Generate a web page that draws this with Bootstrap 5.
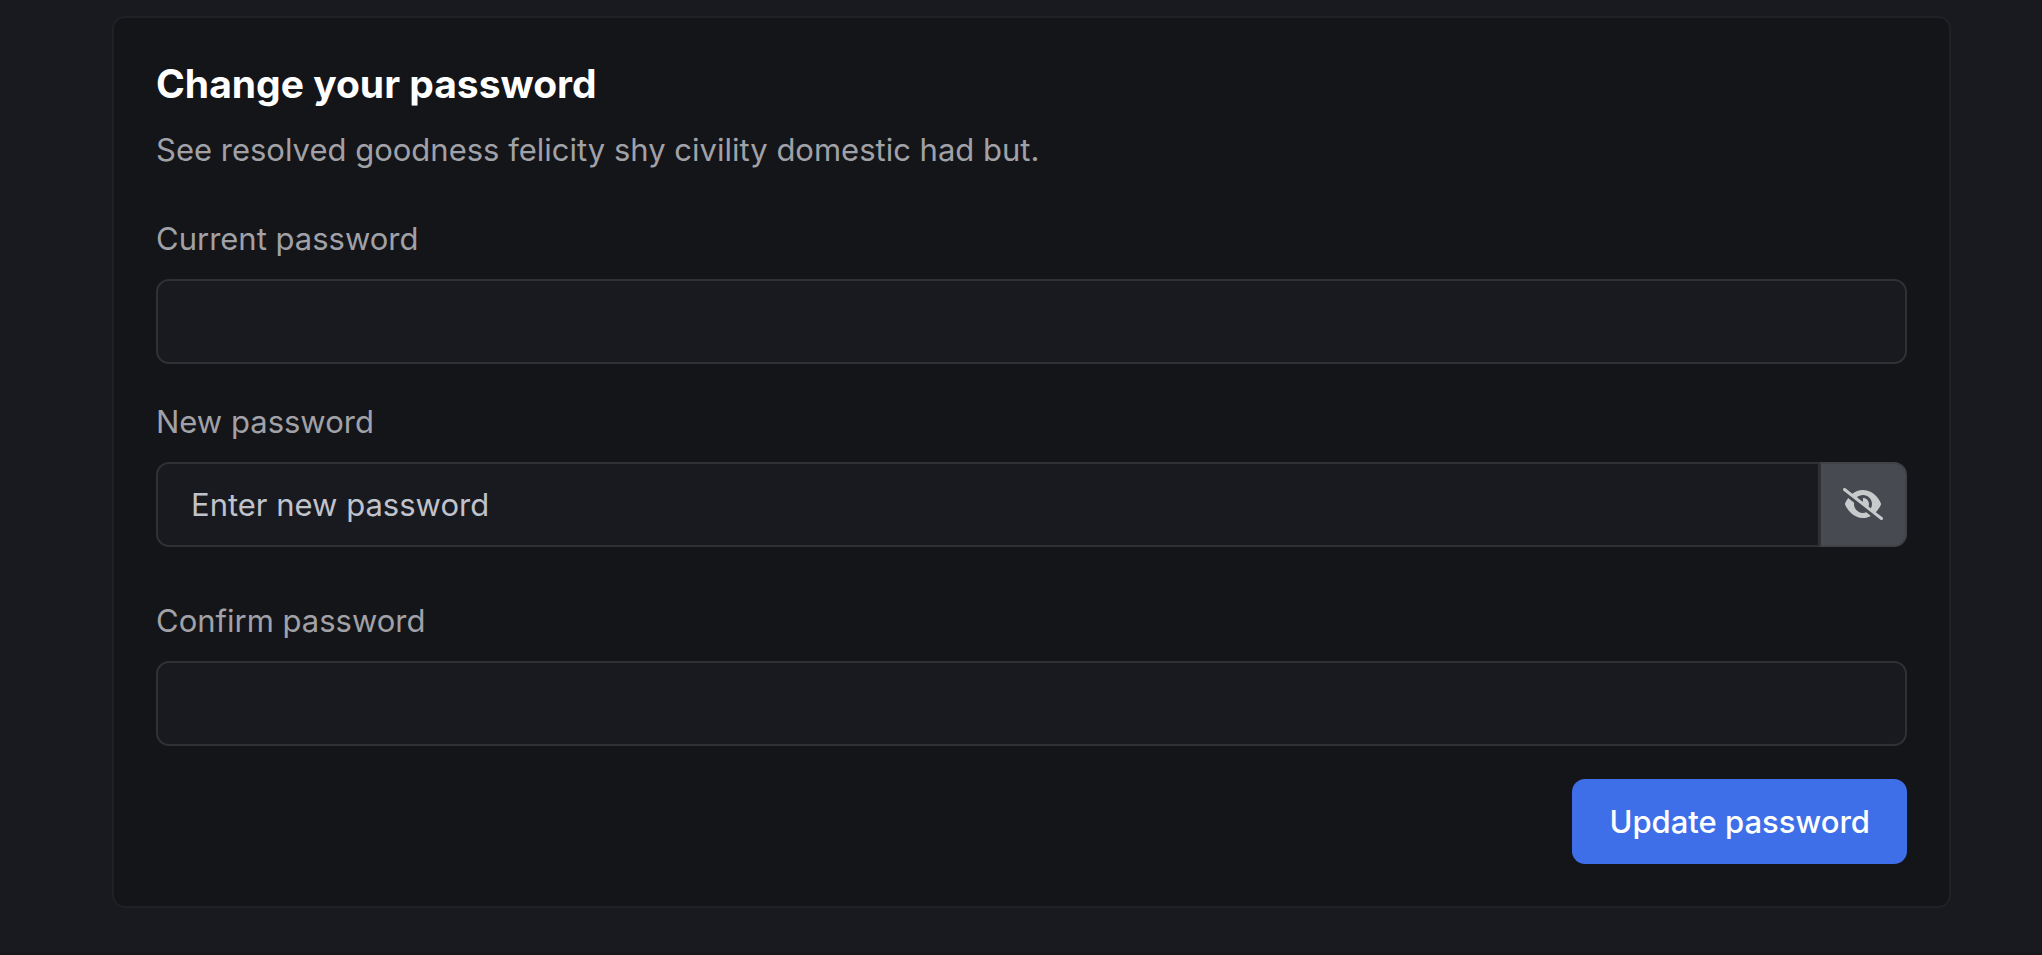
<!DOCTYPE html>
<html lang="en" data-bs-theme="dark">
<head>
<meta charset="utf-8">
<meta name="viewport" content="width=device-width, initial-scale=1">
<title>Change your password</title>
<link href="https://cdn.jsdelivr.net/npm/bootstrap@5.3.0/dist/css/bootstrap.min.css" rel="stylesheet">
<style>
  body { background: #191a1f; color: #a1a1a8; font-family: Inter, sans-serif; font-size: 31px; line-height: 48px; font-optical-sizing: none; }
  .page-wrap { padding: 16px 91px 45px 112px; border-bottom: 2px solid #17151a; }
  .password-card { background: #141518; border: 2px solid #202124; border-radius: 13px; }
  .password-card .card-body { padding: 42px; color: #a1a1a8; }
  .password-card .card-title { font-size: 39px; line-height: 48px; font-weight: 700; color: #fff; margin-bottom: 18px; }
  .intro { margin-bottom: 41px; }
  .form-label { margin-bottom: 16px; display: block; }
  .field { margin-bottom: 34px; }
  .field-wide { margin-bottom: 50px; }
  .form-control { height: 85px; padding: 16px 33px; font-size: 31px; line-height: 48px; background: #191a1f; border: 2px solid #303134; border-radius: 13px; color: #c4c5cb; }
  .form-control::placeholder { color: #c0c3cb; opacity: 1; }
  .toggle-btn { width: 88px; padding: 0 0 2px; background: #474a51; border: 2px solid #404246; border-left-color: #303134; border-radius: 13px; color: #c9cacc; }
  .toggle-btn svg { width: 40px; height: 32px; }
  .btn-update { padding: 19px 37px 18px; margin-top: -1px; font-size: 31px; line-height: 48px; font-weight: 500; border: 0; border-radius: 13px; background: #3e6fe9; color: #fff; }
</style>
</head>
<body>
<main class="page-wrap">
  <section class="card password-card">
    <div class="card-body">
      <h1 class="card-title">Change your password</h1>
      <p class="intro">See resolved goodness felicity shy civility domestic had but.</p>
      <form>
        <div class="field">
          <label class="form-label" for="current">Current password</label>
          <input class="form-control" type="password" id="current">
        </div>
        <div class="field-wide">
          <label class="form-label" for="new">New password</label>
          <div class="input-group">
            <input class="form-control" type="password" id="new" placeholder="Enter new password">
            <button class="btn toggle-btn d-flex align-items-center justify-content-center" type="button" aria-label="Show password">
              <svg viewBox="0 0 640 512" fill="currentColor" aria-hidden="true"><path d="M38.8 5.1C28.4-3.1 13.3-1.2 5.1 9.2S-1.2 34.7 9.2 42.9l592 464c10.4 8.2 25.5 6.3 33.7-4.1s6.3-25.5-4.1-33.7L525.6 386.7c39.6-40.6 66.4-86.1 79.9-118.4c3.3-7.9 3.3-16.7 0-24.6c-14.9-35.7-46.2-87.7-93-131.1C465.5 68.8 400.8 32 320 32c-68.2 0-125 26.3-169.3 60.8L38.8 5.1zM223.1 149.5C248.6 126.2 282.7 112 320 112c79.5 0 144 64.5 144 144c0 24.9-6.3 48.3-17.4 68.7L408 294.5c8.4-19.3 10.6-41.4 4.8-63.3c-11.1-41.5-47.8-69.4-88.6-71.1c-5.8-.2-9.2 6.1-7.4 11.7c2.1 6.4 3.3 13.2 3.3 20.3c0 10.2-2.4 19.8-6.6 28.3l-90.3-70.8zM373 389.9c-16.4 6.5-34.3 10.1-53 10.1c-79.5 0-144-64.5-144-144c0-6.9 .5-13.6 1.4-20.2L83.1 161.5C60.3 191.2 44 220.8 34.5 243.7c-3.3 7.9-3.3 16.7 0 24.6c14.9 35.7 46.2 87.7 93 131.1C174.5 443.2 239.2 480 320 480c47.8 0 89.9-12.9 126.2-32.5L373 389.9z"/></svg>
            </button>
          </div>
        </div>
        <div class="field">
          <label class="form-label" for="confirm">Confirm password</label>
          <input class="form-control" type="password" id="confirm">
        </div>
        <div class="d-flex justify-content-end">
          <button class="btn btn-update" type="submit">Update password</button>
        </div>
      </form>
    </div>
  </section>
</main>
<script src="https://cdn.jsdelivr.net/npm/bootstrap@5.3.0/dist/js/bootstrap.bundle.min.js"></script>
</body>
</html>
